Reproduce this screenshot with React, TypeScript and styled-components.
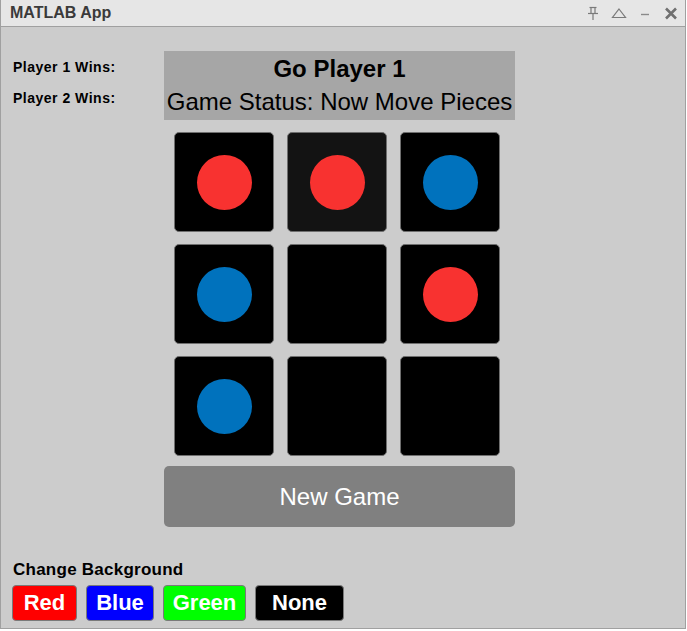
import React from "react";
import styled, { createGlobalStyle } from "styled-components";

const Global = createGlobalStyle`
  html, body { margin: 0; padding: 0; background: #ffffff; }
  * { box-sizing: border-box; }
`;

const FONT = `"Liberation Sans", Arial, Helvetica, sans-serif`;

const Window = styled.div`
  width: 686px;
  height: 629px;
  display: flex;
  flex-direction: column;
  border: 1px solid #a0a0a0;
  border-top: none;
  background: #cccccc;
  font-family: ${FONT};
`;

const TitleBar = styled.div`
  height: 27px;
  flex: none;
  display: flex;
  align-items: center;
  justify-content: space-between;
  background: #e6e6e6;
  border-bottom: 1px solid #a0a0a0;
  padding: 0 6px 1px 9px;
`;

const Title = styled.div`
  font-size: 16px;
  font-weight: bold;
  color: #3a3a3a;
`;

const Controls = styled.div`
  display: flex;
  align-items: center;
  gap: 10px;
`;

const IconBox = styled.svg`
  width: 16px;
  height: 16px;
  display: block;
`;

const Content = styled.div`
  flex: 1;
  display: flex;
  flex-direction: column;
`;

const Main = styled.div`
  display: flex;
  padding: 24px 0 0 12px;
`;

const LeftCol = styled.div`
  width: 151px;
  flex: none;
  display: flex;
  flex-direction: column;
  gap: 15px;
  padding-top: 8px;
`;

const WinLabel = styled.div`
  font-size: 14px;
  line-height: 16px;
  font-weight: bold;
  letter-spacing: 0.5px;
  color: #000;
`;

const CenterCol = styled.div`
  width: 351px;
  display: flex;
  flex-direction: column;
`;

const StatusPanel = styled.div`
  height: 69px;
  background: #a6a6a6;
  display: flex;
  flex-direction: column;
  align-items: center;
  padding-top: 4px;
  gap: 5px;
`;

const StatusLine = styled.div<{ $bold?: boolean }>`
  font-size: 24px;
  line-height: 28px;
  font-weight: ${(p) => (p.$bold ? "bold" : "normal")};
  color: #000;
  white-space: nowrap;
`;

const Board = styled.div`
  margin: 12px 0 0 10px;
  display: grid;
  grid-template-columns: repeat(3, 100px);
  grid-auto-rows: 100px;
  row-gap: 12px;
  column-gap: 13px;
`;

const Cell = styled.div<{ $active?: boolean }>`
  background: ${(p) => (p.$active ? "#131313" : "#000000")};
  border: 1px solid #6f6f6f;
  border-radius: 5px;
  display: flex;
  align-items: center;
  justify-content: center;
`;

const Piece = styled.div<{ $color: string }>`
  width: 55px;
  height: 55px;
  border-radius: 50%;
  background: ${(p) => p.$color};
`;

const NewGame = styled.button`
  margin-top: 10px;
  height: 61px;
  border: none;
  border-radius: 5px;
  background: #808080;
  color: #ffffff;
  font-family: ${FONT};
  font-size: 24px;
  padding: 0;
`;

const Footer = styled.div`
  margin-top: auto;
  padding: 0 0 7px 11px;
  display: flex;
  flex-direction: column;
  gap: 5px;
`;

const FooterLabel = styled.div`
  margin-left: 1px;
  font-size: 17px;
  line-height: 20px;
  letter-spacing: 0.25px;
  font-weight: bold;
  color: #000;
`;

const ColorRow = styled.div`
  display: flex;
  gap: 9px;
`;

const ColorButton = styled.button<{ $bg: string; $w: number }>`
  width: ${(p) => p.$w}px;
  height: 36px;
  background: ${(p) => p.$bg};
  border: 1px solid #7a7a7a;
  border-radius: 4px;
  color: #ffffff;
  font-family: ${FONT};
  font-size: 22px;
  font-weight: bold;
  padding: 0;
`;

const RED = "#f83230";
const BLUE = "#0072bd";

type P = "r" | "b" | null;
const board: P[] = ["r", "r", "b", "b", null, "r", "b", null, null];

const PinIcon = () => (
  <IconBox viewBox="0 0 16 16">
    <g stroke="#7a7a7a" strokeWidth="1.2" fill="none">
      <path d="M4.5 2.5 H11.5" />
      <path d="M6 2.5 V8.5 M10 2.5 V8.5" />
      <path d="M3 8.5 H13" />
      <path d="M8 8.5 V15" />
    </g>
  </IconBox>
);

const UpIcon = () => (
  <IconBox viewBox="0 0 16 16">
    <path d="M8 4 L14.5 12.5 H1.5 Z" stroke="#7a7a7a" strokeWidth="1.2" fill="none" strokeLinejoin="miter" />
  </IconBox>
);

const MinIcon = () => (
  <IconBox viewBox="0 0 16 16">
    <path d="M4 9.5 H12" stroke="#8a8a8a" strokeWidth="1.4" />
  </IconBox>
);

const CloseIcon = () => (
  <IconBox viewBox="0 0 16 16">
    <path d="M3 3.5 L13 13.5 M13 3.5 L3 13.5" stroke="#707070" strokeWidth="2.6" />
  </IconBox>
);

export default function App() {
  return (
    <>
      <Global />
      <Window>
        <TitleBar>
          <Title>MATLAB App</Title>
          <Controls>
            <PinIcon />
            <UpIcon />
            <MinIcon />
            <CloseIcon />
          </Controls>
        </TitleBar>
        <Content>
          <Main>
            <LeftCol>
              <WinLabel>Player 1 Wins:</WinLabel>
              <WinLabel>Player 2 Wins:</WinLabel>
            </LeftCol>
            <CenterCol>
              <StatusPanel>
                <StatusLine $bold>Go Player 1</StatusLine>
                <StatusLine>Game Status: Now Move Pieces</StatusLine>
              </StatusPanel>
              <Board>
                {board.map((p, i) => (
                  <Cell key={i} $active={i === 1}>
                    {p && <Piece $color={p === "r" ? RED : BLUE} />}
                  </Cell>
                ))}
              </Board>
              <NewGame>New Game</NewGame>
            </CenterCol>
          </Main>
          <Footer>
            <FooterLabel>Change Background</FooterLabel>
            <ColorRow>
              <ColorButton $bg="#ff0000" $w={65}>Red</ColorButton>
              <ColorButton $bg="#0000ff" $w={68}>Blue</ColorButton>
              <ColorButton $bg="#00ff00" $w={83}>Green</ColorButton>
              <ColorButton $bg="#000000" $w={89}>None</ColorButton>
            </ColorRow>
          </Footer>
        </Content>
      </Window>
    </>
  );
}
